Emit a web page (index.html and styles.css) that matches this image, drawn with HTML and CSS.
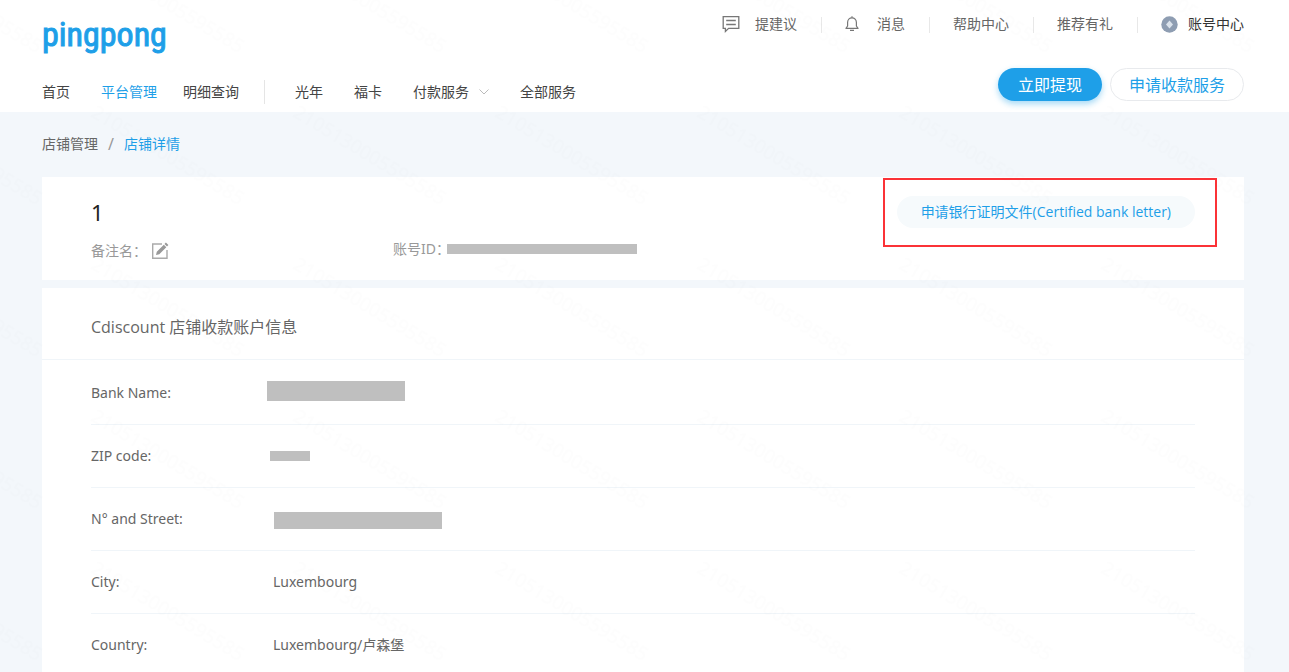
FILE: index.html
```html
<!DOCTYPE html>
<html lang="zh-CN">
<head>
<meta charset="utf-8">
<title>店铺详情 - PingPong</title>
<meta name="viewport" content="width=device-width, initial-scale=1">
<link rel="stylesheet" href="styles.css">
</head>
<body>
<header class="header">
  <div class="topbar">
    <a class="logo" href="#">pingpong</a>
    <ul class="utility">
      <li><a href="#"><svg class="icon-chat" width="18" height="18" viewBox="0 0 18 18" fill="none" stroke="#777" stroke-width="1.3"><path d="M1.2 1.7h15.600v11.600H6.600L3.400 16.400v-3.100H1.200z"/><path d="M4.200 5.500h9.600M4.200 9.500h9.600"/></svg>提建议</a></li>
      <li><a href="#"><svg class="icon-bell" width="14" height="16" viewBox="0 0 14 16" fill="none" stroke="#777" stroke-width="1.2"><path d="M1 12.400h12L11.400 10V6.400C11.400 3.800 9.500 1.900 7 1.900S2.600 3.800 2.600 6.400V10z" stroke-linejoin="round"/><path d="M7 .3v1.500M5 14.400h4"/></svg>消息</a></li>
      <li><a href="#">帮助中心</a></li>
      <li><a href="#">推荐有礼</a></li>
      <li><a class="account" href="#"><svg width="17" height="17" viewBox="0 0 17 17"><circle cx="8.500" cy="8.500" r="8.200" fill="#8e9db2"/><path d="M8.500 4.500l3.500 4-3.500 4-3.500-4z" fill="#dbe3ec"/></svg>账号中心</a></li>
    </ul>
  </div>
  <div class="mainbar">
    <nav class="nav">
      <a href="#">首页</a>
      <a class="active" href="#">平台管理</a>
      <a href="#">明细查询</a>
      <span class="divider"></span>
      <a href="#">光年</a>
      <a href="#">福卡</a>
      <a class="has-menu" href="#">付款服务<svg width="10" height="6" viewBox="0 0 10 6" fill="none" stroke="#bbb"><path d="M.5.5L5 5 9.500.5"/></svg></a>
      <a href="#">全部服务</a>
    </nav>
    <div class="actions">
      <button class="btn primary" type="button">立即提现</button>
      <button class="btn outline" type="button">申请收款服务</button>
    </div>
  </div>
</header>
<main class="page">
  <nav class="crumbs"><a href="#">店铺管理</a><span>/</span><a class="current" href="#">店铺详情</a></nav>
  <section class="card store">
    <div class="store-name">
      <h1>1</h1>
      <p>备注名：<button class="edit" type="button" aria-label="编辑"><svg width="18" height="18" viewBox="0 0 18 18"><path d="M11 2H1.700v14.300H16V8" fill="none" stroke="#aaa" stroke-width="1.400"/><path d="M5 13l.8-3.300 7-7 2.500 2.500-7 7zM13.500 2l1.400-1.400 2.500 2.500L16 4.500z" fill="#999"/></svg></button></p>
    </div>
    <p class="store-id">账号ID：<span class="mask mask-id"></span></p>
    <div class="highlight"><button class="letter" type="button">申请银行证明文件(Certified bank letter)</button></div>
  </section>
  <section class="card">
    <h2>Cdiscount 店铺收款账户信息</h2>
    <dl class="info">
      <div><dt>Bank Name:</dt><dd><span class="mask mask-bank"></span></dd></div>
      <div><dt>ZIP code:</dt><dd><span class="mask mask-zip"></span></dd></div>
      <div><dt>N° and Street:</dt><dd><span class="mask mask-street"></span></dd></div>
      <div><dt>City:</dt><dd>Luxembourg</dd></div>
      <div><dt>Country:</dt><dd>Luxembourg/卢森堡</dd></div>
    </dl>
  </section>
</main>
<svg class="watermark" aria-hidden="true">
  <defs><pattern id="wm" x="86" y="-50" width="202" height="152" patternUnits="userSpaceOnUse">
    <text class="wm-text" transform="translate(4 14) rotate(31)">2105130005595585</text>
  </pattern></defs>
  <rect width="100%" height="100%" fill="url(#wm)"/>
</svg>
</body>
</html>
```
FILE: styles.css
```css
* { box-sizing: border-box; }
body {
  margin: 0;
  height: 100vh;
  overflow: hidden;
  background: #f3f7fb;
  color: #666;
  font: 14px/20px "Noto Sans", "Noto Sans CJK SC", sans-serif;
}
a { color: inherit; text-decoration: none; }
h1, h2, p, ul, dl, dd { margin: 0; padding: 0; font-weight: 400; }
button { font: inherit; cursor: pointer; }
svg { flex: none; }

.header { height: 112px; padding: 0 45px 0 42px; background: #fff; }
.topbar { display: flex; justify-content: space-between; height: 64px; }
.logo {
  margin-top: 10px;
  color: #1e9fe8;
  font: 34px/48px "Roboto Condensed", Roboto, sans-serif;
  -webkit-text-stroke: 1px #1e9fe8;
}
.utility { display: flex; align-items: flex-start; list-style: none; padding-top: 14px; }
.utility li { display: flex; }
.utility li + li::before { content: ""; width: 1px; height: 16px; margin: 3px 23px 0 24px; background: #e8e8e8; }
.utility a { display: flex; align-items: center; height: 20px; }
.icon-chat { margin-right: 15px; }
.icon-bell { margin-right: 18px; }
.account { gap: 10px; color: #333; }

.mainbar { display: flex; justify-content: space-between; }
.nav { display: flex; align-items: center; height: 32px; margin-top: 12px; color: #444; }
.nav a + a { margin-left: 31px; }
.nav .active { color: #1e9fe8; }
.nav .active + a { margin-left: 26px; }
.divider { width: 1px; height: 24px; margin: 0 30px 0 25px; background: #e5e5e5; }
.has-menu { display: flex; align-items: center; gap: 10px; }
.actions { display: flex; gap: 8px; margin-top: 4px; }
.btn { height: 33px; padding: 0 18px; border-radius: 17px; font-size: 16px; }
.primary { padding: 0 20px; border: 0; background: #1e9fe8; color: #fff; box-shadow: 0 3px 6px #1e9fe866; }
.outline { border: 1px solid #e8eaed; background: #fff; color: #1e9fe8; }

.page { padding: 22px 45px 0 42px; }
.crumbs { display: flex; margin-bottom: 23px; }
.crumbs span { margin: 0 10px; color: #999; font-size: 16px; }
.crumbs .current { color: #1e9fe8; }
.card { margin-bottom: 8px; background: #fff; }
.store { display: flex; height: 103px; padding-left: 49px; color: #999; }
.store-name { width: 302px; padding-top: 21px; }
.store-name h1 { color: #222; font-size: 22px; line-height: 28px; }
.store-name p { display: flex; align-items: center; margin-top: 15px; }
.edit { display: flex; margin-left: 4px; padding: 0; border: 0; background: none; }
.store-id { display: flex; padding-top: 62px; }
.highlight {
  height: 69px;
  margin: 1px 27px 0 auto;
  padding: 16px 20px 0 12px;
  border: 2px solid #fb3237;
}
.letter {
  height: 32px;
  padding: 0 24px;
  border: 0;
  border-radius: 16px;
  background: #f6fafc;
  color: #1e9fe8;
  font-family: "Open Sans", "Noto Sans CJK SC", sans-serif;
}
.mask { display: block; background: #bfbfbf; }
.mask-id { width: 190px; height: 10px; margin: 5px 0 0 -3px; }
.mask-bank { width: 138px; height: 20px; margin: 0 0 4px -6px; }
.mask-zip { width: 40px; height: 10px; margin-left: -3px; }
.mask-street { width: 168px; height: 17px; margin: 2px 0 0 1px; }

h2 {
  padding: 28px 49px 20px;
  border-bottom: 1px solid #f0f5f9;
  font: 16px/23px "Open Sans", "Noto Sans CJK SC", sans-serif;
}
.info { padding: 2px 49px 0; }
.info div { display: flex; align-items: center; height: 63px; border-bottom: 1px solid #f0f5f9; }
.info dt { width: 182px; }

.watermark { position: absolute; inset: 0; width: 100%; height: 100%; pointer-events: none; }
.wm-text { font-size: 19px; fill: #000; fill-opacity: 0.008; }
```
